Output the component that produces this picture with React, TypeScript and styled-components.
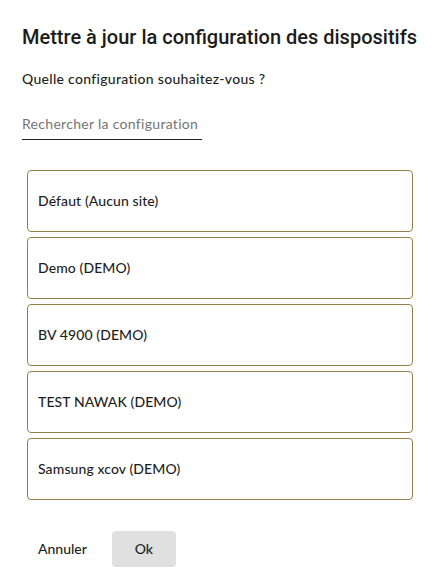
import { createGlobalStyle } from "styled-components"
import styled from "styled-components"

const configs = [
	"Défaut (Aucun site)",
	"Demo (DEMO)",
	"BV 4900 (DEMO)",
	"TEST NAWAK (DEMO)",
	"Samsung xcov (DEMO)",
]

const GlobalStyle = createGlobalStyle`
	body {
		margin: 0;
		background: #ffffff;
		font-family: Lato, "Noto Sans", sans-serif;
		color: #1f1f1f;
	}
`

const App = () => {
	return (
		<>
			<GlobalStyle />
			<Dialog>
				<Title>Mettre à jour la configuration des dispositifs</Title>
				<Question>Quelle configuration souhaitez-vous ?</Question>
				<SearchInput placeholder="Rechercher la configuration" />
				<List>
					{configs.map((name) => (
						<ConfigCard key={name}>{name}</ConfigCard>
					))}
				</List>
				<Actions>
					<TextButton>Annuler</TextButton>
					<OkButton>Ok</OkButton>
				</Actions>
			</Dialog>
		</>
	)
}

const Dialog = styled.div`
	width: 439px;
	height: 578px;
	box-sizing: border-box;
	padding: 24px 22px 0 22px;
	display: flex;
	flex-direction: column;
`

const Title = styled.h1`
	margin: 0;
	font-family: Roboto, "Liberation Sans", sans-serif;
	font-size: 20px;
	font-weight: 500;
	line-height: 26px;
	color: #1c1c1c;
	white-space: nowrap;
`

const Question = styled.p`
	margin: 20px 0 0 0;
	font-size: 14px;
	font-weight: 500;
	line-height: 18px;
	letter-spacing: 0.3px;
`

const SearchInput = styled.input`
	margin-top: 27px;
	width: 180px;
	box-sizing: border-box;
	border: none;
	border-bottom: 1px solid #222;
	padding: 0 0 6px 0;
	font-family: Lato, "Noto Sans", sans-serif;
	font-size: 14px;
	line-height: 18px;
	letter-spacing: 0.3px;
	outline: none;
	background: transparent;

	::placeholder {
		color: #7a7a7a;
	}
`

const List = styled.div`
	margin: 30px 4px 0 5px;
	display: flex;
	flex-direction: column;
	gap: 5.5px;
`

const ConfigCard = styled.div`
	height: 61.5px;
	box-sizing: border-box;
	border: 1px solid #947f49;
	border-radius: 4px;
	padding: 0 10px;
	display: flex;
	align-items: center;
	font-size: 14px;
	font-weight: 500;
	letter-spacing: 0.1px;
	color: #1f1f1f;
	cursor: pointer;
`

const Actions = styled.div`
	margin: 31px 0 0 5px;
	display: flex;
	align-items: center;
	gap: 14px;
`

const TextButton = styled.button`
	height: 36px;
	padding: 0 11px;
	border: none;
	border-radius: 4px;
	background: transparent;
	font-family: Lato, "Noto Sans", sans-serif;
	font-size: 14px;
	font-weight: 500;
	color: #1f1f1f;
	cursor: pointer;
`

const OkButton = styled(TextButton)`
	width: 64px;
	background: #e0e0e0;
`

export default App
